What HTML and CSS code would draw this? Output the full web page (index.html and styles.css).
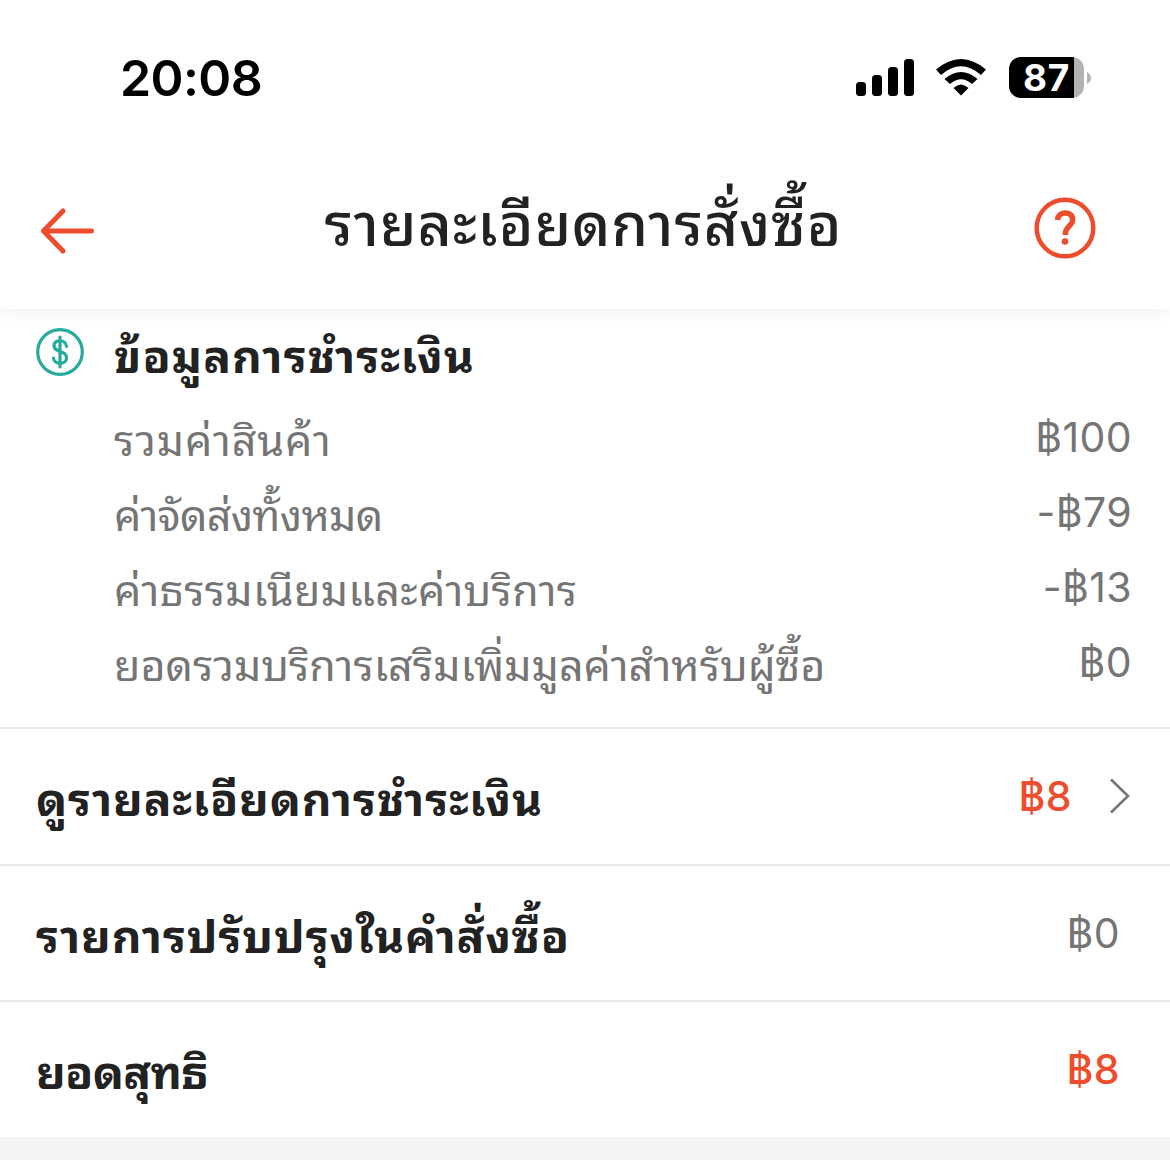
FILE: index.html
```html
<!DOCTYPE html>
<html lang="th">
<head>
<meta charset="utf-8">
<title>รายละเอียดการสั่งซื้อ</title>
<link rel="stylesheet" href="styles.css">
</head>
<body>
<header class="top">
  <div class="status">
    <span class="clock">20:08</span>
    <div class="indicators">
      <svg class="signal" width="58" height="37" viewBox="0 0 58 37"><rect x="0" y="23" width="10" height="14" rx="3.5"/><rect x="16" y="16" width="10" height="21" rx="3.5"/><rect x="32" y="8" width="10" height="29" rx="3.5"/><rect x="48" y="0" width="10" height="37" rx="3.5"/></svg>
      <svg class="wifi" width="50" height="37" viewBox="0 0 50 37"><path d="M0 10.500Q25-10.500 50 10.500L45 16Q25-1.500 5 16ZM8.500 20Q25 6 41.500 20L36 25Q25 15.500 14 25ZM17.500 29Q25 22 32.500 29L25 36.500Z"/></svg>
      <div class="battery"><span class="level">87</span></div><svg class="cap" width="4" height="12" viewBox="0 0 4 12"><path d="M0 0Q4 2.500 4 6T0 12Z"/></svg>
    </div>
  </div>
  <div class="bar">
    <svg class="back" width="54" height="46" viewBox="0 0 54 46"><path d="M23 3L3.500 23L23 43M4 23H51.500"/></svg>
    <h1 class="title"><span class="txt">รายละเอียดการสั่งซื้อ</span></h1>
    <svg class="help" width="62" height="62" viewBox="0 0 62 62"><circle cx="31" cy="31" r="28.300"/><path class="hook" d="M23.500 23C24 13.500 39 13.500 38.700 23C38.500 29 31 29 31.300 38"/><circle class="dot" cx="31" cy="44.500" r="3.300"/></svg>
  </div>
</header>
<main>
  <section class="payment">
    <svg class="coin" width="48" height="48" viewBox="0 0 48 48"><circle cx="24" cy="24" r="22.300"/><path d="M24 9V39M30.500 18.500C30 11 18 11 18 17.500C18 25.500 30.500 21.500 30.500 30C30.500 37 18 37 17.500 30"/></svg>
    <div class="info">
      <h2 class="heading"><span class="txt">ข้อมูลการชำระเงิน</span></h2>
      <div class="line"><span class="txt loose">รวมค่าสินค้า</span><span class="amt">฿100</span></div>
      <div class="line"><span class="txt tight">ค่าจัดส่งทั้งหมด</span><span class="amt">-฿79</span></div>
      <div class="line"><span class="txt relaxed">ค่าธรรมเนียมและค่าบริการ</span><span class="amt">-฿13</span></div>
      <div class="line"><span class="txt">ยอดรวมบริการเสริมเพิ่มมูลค่าสำหรับผู้ซื้อ</span><span class="amt">฿0</span></div>
    </div>
  </section>
  <section class="row"><span class="txt loose">ดูรายละเอียดการชำระเงิน</span><span class="amt red">฿8</span><svg class="chevron" width="20" height="36" viewBox="0 0 20 36"><path d="M1 1.500L18 18L1 34.500"/></svg></section>
  <section class="row"><span class="txt loose">รายการปรับปรุงในคำสั่งซื้อ</span><span class="amt">฿0</span></section>
  <section class="row"><span class="txt tight">ยอดสุทธิ</span><span class="amt red">฿8</span></section>
</main>
</body>
</html>
```
FILE: styles.css
```css
* { box-sizing: border-box; }
body { margin: 0; height: 1160px; overflow: hidden; background: #f4f4f4; color: #222; font-family: Inter, sans-serif; }
.top { position: relative; height: 309px; background: #fff; box-shadow: 0 2px 14px rgba(0,0,0,.07); }
.status { height: 155px; display: flex; justify-content: space-between; padding: 0 79px 0 120px; align-items: center; }
.clock { font-size: 50px; font-weight: 600; letter-spacing: -.6px; color: #000; }
.indicators { display: flex; align-items: center; }
.wifi { margin: 0 23px 0 22px; }
.battery { width: 75px; height: 41px; border-radius: 12px; background: linear-gradient(90deg, #000 65px, #b3b3b3 65px); color: #fff; font-size: 37px; font-weight: 700; line-height: 41px; letter-spacing: .8px; text-align: center; }
.cap { margin-left: 3px; fill: #b3b3b3; }
.bar { height: 154px; display: flex; justify-content: space-between; padding: 0 74px 0 40px; }
.title { margin: 25px 0 0; padding-left: 39px; font-size: 59px; line-height: 80px; font-weight: 500; letter-spacing: .9px; }
.back, .help, .coin, .chevron { fill: none; stroke: #ee4d2d; stroke-width: 5; }
.back { margin-top: 53px; stroke-linecap: round; stroke-linejoin: round; }
.help { margin-top: 42px; stroke-width: 4.5; }
.help .hook { stroke-width: 5.5; }
.help .dot { fill: #ee4d2d; stroke: none; }
main { background: #fff; }
.payment { display: flex; height: 418px; padding: 15px 38px 0 36px; gap: 30px; }
.coin { margin-top: 4px; stroke: #26aa99; stroke-width: 3.2; stroke-linecap: round; }
.info { flex: 1; }
.heading { margin: 0; font-size: 46px; line-height: 57px; height: 76px; font-weight: 700; letter-spacing: 1.1px; }
.line { display: flex; justify-content: space-between; height: 75px; line-height: 75px; font-size: 43px; color: #757575; }
.line .txt { margin-top: -1px; }
.line .amt { font-size: 41px; letter-spacing: .4px; }
.row { display: flex; align-items: center; height: 136.6px; border-top: 2px solid #e8e8e8; padding: 0 50px 0 36px; font-size: 46px; font-weight: 700; }
.row .txt { padding-bottom: 2px; }
.row .amt { margin-left: auto; font-size: 41px; letter-spacing: .4px; font-weight: 400; color: #757575; }
.row .red { color: #ee4d2d; font-weight: 500; }
.chevron { margin: 0 -10px 0 38px; stroke: #757575; stroke-width: 2.5; }
.txt { font-family: "Noto Sans Thai Looped", "Noto Looped Thai", "Sarabun", "Loma", "Garuda", "Waree", "Norasi", "Noto Serif Thai", "FreeSerif", Inter, sans-serif; white-space: nowrap; }
.loose { letter-spacing: .9px; }
.relaxed { letter-spacing: .3px; }
.tight { letter-spacing: -.7px; }
```
